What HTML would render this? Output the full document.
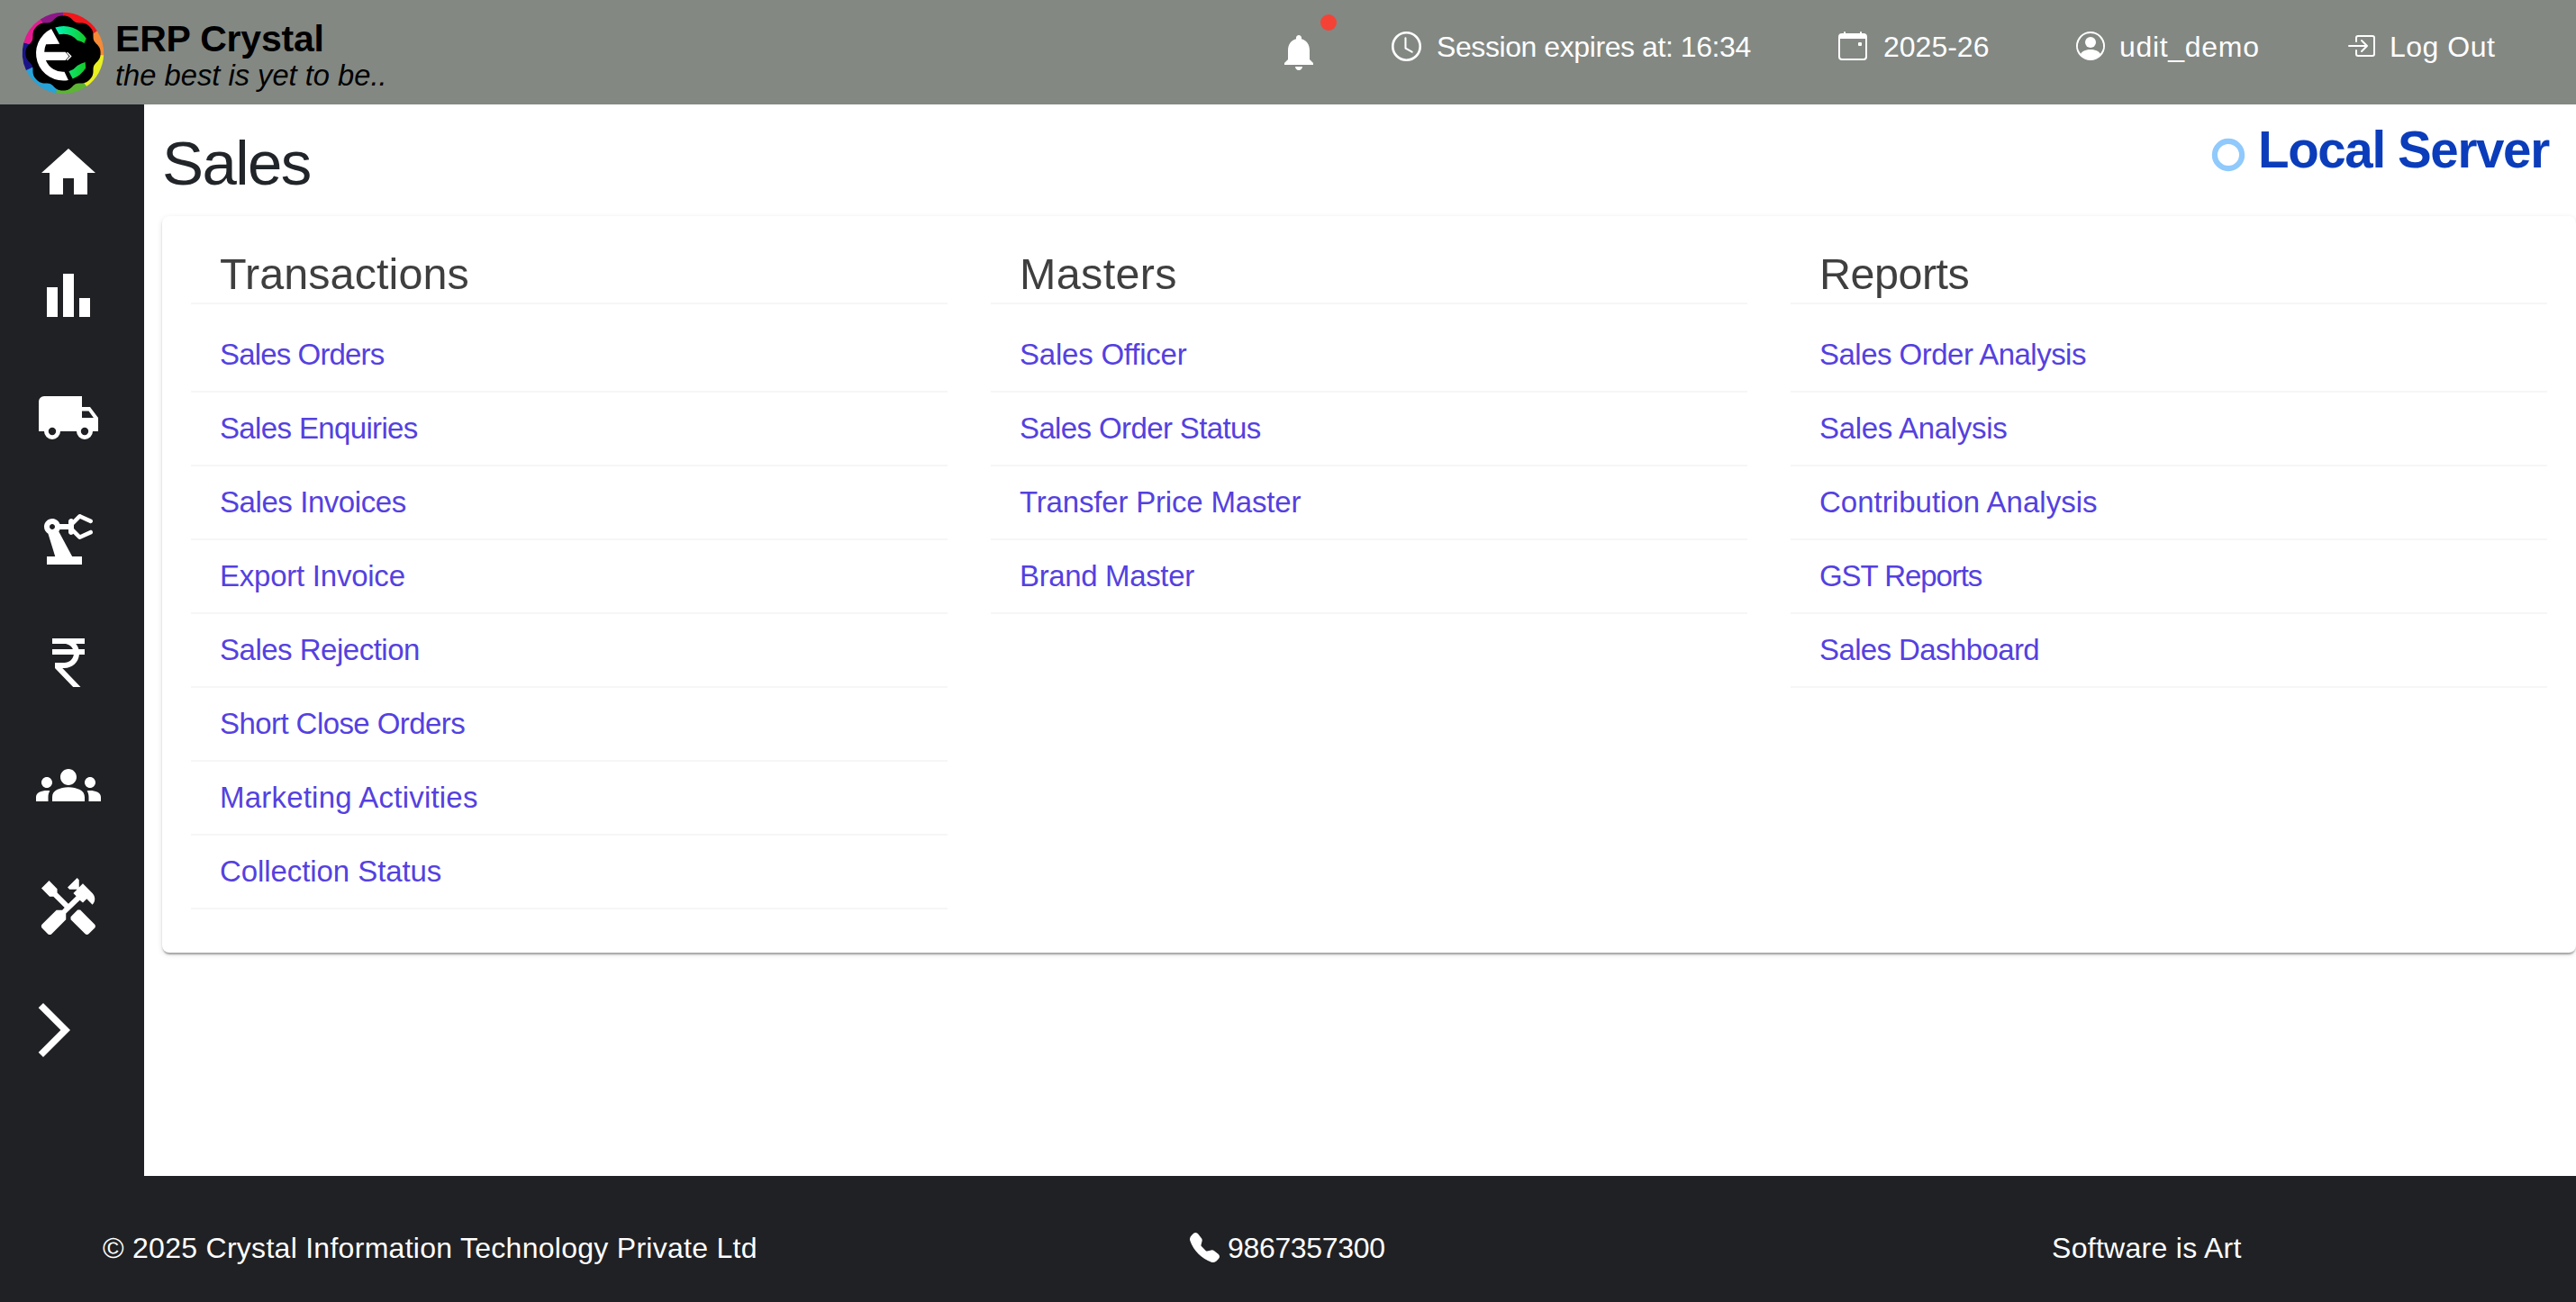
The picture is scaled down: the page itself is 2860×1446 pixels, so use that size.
<!DOCTYPE html>
<html><head><meta charset="utf-8">
<style>
html,body{margin:0;padding:0;width:2860px;height:1446px;overflow:hidden;background:#fff;font-family:"Liberation Sans",sans-serif;}
.a{position:absolute;white-space:nowrap;}
#hdr{position:absolute;left:0;top:0;width:2860px;height:116px;background:#838883;}
#side{position:absolute;left:0;top:116px;width:160px;height:1190px;background:#202124;}
#foot{position:absolute;left:0;top:1306px;width:2860px;height:140px;background:#202124;}
.ht{color:#fff;font-size:32px;line-height:32px;}
svg.ico{position:absolute;fill:#fff;overflow:visible;}
.card{position:absolute;left:180px;top:240px;width:2680px;height:818px;background:#fff;border-radius:8px;
 box-shadow:0 4px 2px -2px rgba(0,0,0,.2),0 2px 2px 0 rgba(0,0,0,.14),0 2px 6px 0 rgba(0,0,0,.12);}
.hd{color:#3f3f3f;font-size:48.5px;line-height:48px;}
.ln{color:#5441df;font-size:33px;line-height:33px;}
.dv{position:absolute;height:2px;background:#f6f6f6;width:840px;}
.ft{color:#fff;font-size:32px;line-height:32px;}
</style></head><body>
<div id="hdr"></div>
<div id="side"></div>
<div id="foot"></div>

<!-- logo -->
<svg class="ico" style="left:25px;top:14px;" width="90" height="90" viewBox="0 0 90 90">
<defs>
<linearGradient id="g1" gradientUnits="userSpaceOnUse" x1="36" y1="0" x2="71" y2="0"><stop offset="0" stop-color="#00f8be"/><stop offset="1" stop-color="#14c923"/></linearGradient>
<linearGradient id="g2" gradientUnits="userSpaceOnUse" x1="51" y1="0" x2="71" y2="0"><stop offset="0" stop-color="#0fe46c"/><stop offset="1" stop-color="#14c925"/></linearGradient>
</defs>
<path d="M45 45 L45.00 -0.20 A45.2 45.2 0 0 1 82.91 20.38Z" fill="#f3161a"/><path d="M45 45 L82.91 20.38 A45.2 45.2 0 0 1 90.14 47.37Z" fill="#f68a36"/><path d="M45 45 L90.14 47.37 A45.2 45.2 0 0 1 70.93 82.03Z" fill="#e9f01f"/><path d="M45 45 L70.93 82.03 A45.2 45.2 0 0 1 37.15 89.51Z" fill="#5db434"/><path d="M45 45 L37.15 89.51 A45.2 45.2 0 0 1 4.03 64.10Z" fill="#27a3d7"/><path d="M45 45 L4.03 64.10 A45.2 45.2 0 0 1 1.34 33.30Z" fill="#1b1488"/><path d="M45 45 L1.34 33.30 A45.2 45.2 0 0 1 19.72 7.53Z" fill="#e41a8f"/><path d="M45 45 L19.72 7.53 A45.2 45.2 0 0 1 45.00 -0.20Z" fill="#8d1787"/>
<path d="M86.60 45.00 L86.58 46.09 L86.51 47.18 L86.36 48.26 L86.11 49.32 L85.75 50.36 L85.26 51.38 L84.65 52.35 L83.95 53.28 L83.18 54.17 L82.38 55.02 L81.58 55.84 L80.84 56.64 L80.17 57.46 L79.62 58.29 L79.18 59.16 L78.87 60.08 L78.68 61.06 L78.58 62.11 L78.53 63.21 L78.51 64.35 L78.48 65.52 L78.40 66.69 L78.24 67.84 L77.98 68.96 L77.61 70.02 L77.13 71.02 L76.55 71.95 L75.89 72.82 L75.17 73.63 L74.42 74.42 L73.63 75.17 L72.82 75.89 L71.95 76.55 L71.02 77.13 L70.02 77.61 L68.96 77.98 L67.84 78.24 L66.69 78.40 L65.52 78.48 L64.35 78.51 L63.21 78.53 L62.11 78.58 L61.06 78.68 L60.08 78.87 L59.16 79.18 L58.29 79.62 L57.46 80.17 L56.64 80.84 L55.84 81.58 L55.02 82.38 L54.17 83.18 L53.28 83.95 L52.35 84.65 L51.38 85.26 L50.36 85.75 L49.32 86.11 L48.26 86.36 L47.18 86.51 L46.09 86.58 L45.00 86.60 L43.91 86.58 L42.82 86.51 L41.74 86.36 L40.68 86.11 L39.64 85.75 L38.62 85.26 L37.65 84.65 L36.72 83.95 L35.83 83.18 L34.98 82.38 L34.16 81.58 L33.36 80.84 L32.54 80.17 L31.71 79.62 L30.84 79.18 L29.92 78.87 L28.94 78.68 L27.89 78.58 L26.79 78.53 L25.65 78.51 L24.48 78.48 L23.31 78.40 L22.16 78.24 L21.04 77.98 L19.98 77.61 L18.98 77.13 L18.05 76.55 L17.18 75.89 L16.37 75.17 L15.58 74.42 L14.83 73.63 L14.11 72.82 L13.45 71.95 L12.87 71.02 L12.39 70.02 L12.02 68.96 L11.76 67.84 L11.60 66.69 L11.52 65.52 L11.49 64.35 L11.47 63.21 L11.42 62.11 L11.32 61.06 L11.13 60.08 L10.82 59.16 L10.38 58.29 L9.83 57.46 L9.16 56.64 L8.42 55.84 L7.62 55.02 L6.82 54.17 L6.05 53.28 L5.35 52.35 L4.74 51.38 L4.25 50.36 L3.89 49.32 L3.64 48.26 L3.49 47.18 L3.42 46.09 L3.40 45.00 L3.42 43.91 L3.49 42.82 L3.64 41.74 L3.89 40.68 L4.25 39.64 L4.74 38.62 L5.35 37.65 L6.05 36.72 L6.82 35.83 L7.62 34.98 L8.42 34.16 L9.16 33.36 L9.83 32.54 L10.38 31.71 L10.82 30.84 L11.13 29.92 L11.32 28.94 L11.42 27.89 L11.47 26.79 L11.49 25.65 L11.52 24.48 L11.60 23.31 L11.76 22.16 L12.02 21.04 L12.39 19.98 L12.87 18.98 L13.45 18.05 L14.11 17.18 L14.83 16.37 L15.58 15.58 L16.37 14.83 L17.18 14.11 L18.05 13.45 L18.98 12.87 L19.98 12.39 L21.04 12.02 L22.16 11.76 L23.31 11.60 L24.48 11.52 L25.65 11.49 L26.79 11.47 L27.89 11.42 L28.94 11.32 L29.92 11.13 L30.84 10.82 L31.71 10.38 L32.54 9.83 L33.36 9.16 L34.16 8.42 L34.98 7.62 L35.83 6.82 L36.72 6.05 L37.65 5.35 L38.62 4.74 L39.64 4.25 L40.68 3.89 L41.74 3.64 L42.82 3.49 L43.91 3.42 L45.00 3.40 L46.09 3.42 L47.18 3.49 L48.26 3.64 L49.32 3.89 L50.36 4.25 L51.38 4.74 L52.35 5.35 L53.28 6.05 L54.17 6.82 L55.02 7.62 L55.84 8.42 L56.64 9.16 L57.46 9.83 L58.29 10.38 L59.16 10.82 L60.08 11.13 L61.06 11.32 L62.11 11.42 L63.21 11.47 L64.35 11.49 L65.52 11.52 L66.69 11.60 L67.84 11.76 L68.96 12.02 L70.02 12.39 L71.02 12.87 L71.95 13.45 L72.82 14.11 L73.63 14.83 L74.42 15.58 L75.17 16.37 L75.89 17.18 L76.55 18.05 L77.13 18.98 L77.61 19.98 L77.98 21.04 L78.24 22.16 L78.40 23.31 L78.48 24.48 L78.51 25.65 L78.53 26.79 L78.58 27.89 L78.68 28.94 L78.87 29.92 L79.18 30.84 L79.62 31.71 L80.17 32.54 L80.84 33.36 L81.58 34.16 L82.38 34.98 L83.18 35.83 L83.95 36.72 L84.65 37.65 L85.26 38.62 L85.75 39.64 L86.11 40.68 L86.36 41.74 L86.51 42.82 L86.58 43.91Z" fill="#000"/>
<path d="M50.9 75 A30.3 30.3 0 0 1 32 18 L41.2 34.7 L26.1 35.2 A21 21 0 0 0 24.2 43.8 L47.6 43.8 L51.5 48.4 L47.6 52.9 L25.9 52.9 A20.7 20.7 0 0 0 46.5 65.7 Z" fill="#fff"/>
<path d="M49.4 44.2 L53.6 48.5 L49.4 52.8" fill="none" stroke="#fff" stroke-width="1.5"/>
<path d="M36.3 16.4 A30 30 0 0 1 70.8 28.7 L68.6 34.1 Q65 31.5 61 30.9 A21.3 21.3 0 0 0 40.6 24.2 Z" fill="url(#g1)"/>
<path d="M70.2 61.5 A30 30 0 0 1 55.7 73.6 L51.4 65.3 A21.3 21.3 0 0 0 61.1 58.8 Q65.5 56 69.7 55.1 Z" fill="url(#g2)"/>
</svg>

<!-- header texts -->
<div id="t_erp" class="a" style="left:128px;top:23px;font-size:41px;line-height:40px;font-weight:bold;color:#000;letter-spacing:-0.2px;">ERP Crystal</div>
<div id="t_tag" class="a" style="left:128px;top:68px;font-size:32.7px;line-height:32px;font-style:italic;color:#000;">the best is yet to be..</div>

<!-- bell -->
<svg class="ico" style="left:1418px;top:34px;" width="48" height="48" viewBox="0 0 24 24"><path d="M12 22c1.1 0 2-.9 2-2h-4c0 1.1.89 2 2 2zm6-6v-5c0-3.07-1.64-5.64-4.5-6.32V4c0-.83-.67-1.5-1.5-1.5s-1.5.67-1.5 1.5v.68C7.63 5.36 6 7.92 6 11v5l-2 2v1h16v-1l-2-2z"/></svg>
<div class="a" style="left:1466px;top:16px;width:18px;height:18px;border-radius:50%;background:#f44336;"></div>
<!-- clock -->
<svg class="ico" style="left:1545px;top:35px;" width="33" height="33" viewBox="0 0 16 16"><path d="M8 3.5a.5.5 0 0 0-1 0V9a.5.5 0 0 0 .252.434l3.5 2a.5.5 0 0 0 .496-.868L8 8.71z"/><circle cx="8" cy="8" r="7.38" fill="none" stroke="#fff" stroke-width="1.28"/></svg>
<div id="t_sess" class="a ht" style="left:1595px;top:36px;letter-spacing:-0.42px;">Session expires at: 16:34</div>
<!-- calendar -->
<svg class="ico" style="left:2041px;top:35px;" width="32" height="32" viewBox="0 0 16 16"><path d="M11 6.5a.5.5 0 0 1 .5-.5h1a.5.5 0 0 1 .5.5v1a.5.5 0 0 1-.5.5h-1a.5.5 0 0 1-.5-.5z"/><path d="M3.5 0a.5.5 0 0 1 .5.5V1h8V.5a.5.5 0 0 1 1 0V1h1a2 2 0 0 1 2 2v11a2 2 0 0 1-2 2H2a2 2 0 0 1-2-2V3a2 2 0 0 1 2-2h1V.5a.5.5 0 0 1 .5-.5M1 4v10a1 1 0 0 0 1 1h12a1 1 0 0 0 1-1V4z"/></svg>
<div id="t_yr" class="a ht" style="left:2091px;top:36px;">2025-26</div>
<!-- user -->
<svg class="ico" style="left:2305px;top:35px;" width="32" height="32" viewBox="0 0 16 16"><path d="M11 6a3 3 0 1 1-6 0 3 3 0 0 1 6 0"/><path fill-rule="evenodd" d="M0 8a8 8 0 1 1 16 0A8 8 0 0 1 0 8m8-7a7 7 0 0 0-5.468 11.37C3.242 11.226 4.805 10 8 10s4.757 1.225 5.468 2.37A7 7 0 0 0 8 1"/></svg>
<div id="t_user" class="a ht" style="left:2353px;top:36px;letter-spacing:0.69px;">udit_demo</div>
<!-- logout -->
<svg class="ico" style="left:2605px;top:35px;" width="32" height="32" viewBox="0 0 16 16"><path fill-rule="evenodd" d="M6 3.5a.5.5 0 0 1 .5-.5h8a.5.5 0 0 1 .5.5v9a.5.5 0 0 1-.5.5h-8a.5.5 0 0 1-.5-.5v-2a.5.5 0 0 0-1 0v2A1.5 1.5 0 0 0 6.5 14h8a1.5 1.5 0 0 0 1.5-1.5v-9A1.5 1.5 0 0 0 14.5 2h-8A1.5 1.5 0 0 0 5 3.5v2a.5.5 0 0 0 1 0z"/><path fill-rule="evenodd" d="M11.854 8.354a.5.5 0 0 0 0-.708l-3-3a.5.5 0 1 0-.708.708L10.293 7.5H1.5a.5.5 0 0 0 0 1h8.793l-2.147 2.146a.5.5 0 0 0 .708.708z"/></svg>
<div id="t_out" class="a ht" style="left:2653px;top:36px;letter-spacing:0.50px;">Log Out</div>

<!-- sidebar icons -->
<svg class="ico" style="left:40px;top:156px;" width="72" height="72" viewBox="0 0 24 24"><path d="M10 20v-6h4v6h5v-8h3L12 3 2 12h3v8z"/></svg>
<svg class="ico" style="left:40px;top:292px;" width="72" height="72" viewBox="0 0 24 24"><path d="M4 9h4v11H4zm12 4h4v7h-4zm-6-9h4v16h-4z"/></svg>
<svg class="ico" style="left:40px;top:428px;" width="72" height="72" viewBox="0 0 24 24"><path fill-rule="evenodd" d="M1 6a2 2 0 0 1 2-2H17V8H20L23 12V17H21A3 3 0 0 1 15 17H9A3 3 0 0 1 3 17H1Z M17 9.5H19.5L21.3 12H17Z M6 15.6a1.4 1.4 0 1 0 0 2.8a1.4 1.4 0 1 0 0-2.8Z M18 15.6a1.4 1.4 0 1 0 0 2.8a1.4 1.4 0 1 0 0-2.8Z"/></svg>
<svg class="ico" style="left:40px;top:564px;" width="72" height="72" viewBox="0 0 24 24"><path d="M19.93 8.35l-3.6 1.68L14 7.7V6.3l2.33-2.33 3.6 1.68c.38.18.82.01 1-.36.18-.38.01-.82-.36-1l-3.92-1.83c-.38-.18-.83-.1-1.13.2L13.78 4.4c-.18-.24-.46-.4-.78-.4-.55 0-1 .45-1 1v1H8.82C8.4 4.84 7.3 4 6 4 4.34 4 3 5.34 3 7c0 1.1.6 2.05 1.48 2.58L7.08 18H4v3h13v-3h-3.62L8.41 8.77c.17-.24.31-.49.41-.77H12v1c0 .55.45 1 1 1 .32 0 .6-.16.78-.4l1.740 1.74c.3.3.75.38 1.13.2l3.92-1.83c.38-.18.54-.62.36-1-.18-.37-.62-.54-1-.36zM6 8c-.55 0-1-.45-1-1s.45-1 1-1 1 .45 1 1-.45 1-1 1z"/></svg>
<svg class="ico" style="left:40px;top:700px;" width="72" height="72" viewBox="0 0 24 24"><path d="M13.66 7C13.1 5.82 11.9 5 10.5 5L6 5V3h12v2l-3.26 0c.48.58.84 1.26 1.05 2L18 7v2l-2.02 0c-.25 2.8-2.61 5-5.48 5h-.73l6.73 7h-2.77L7 14v-2h3.5c1.76 0 3.22-1.3 3.46-3L6 9V7h7.66z"/></svg>
<svg class="ico" style="left:40px;top:836px;" width="72" height="72" viewBox="0 0 24 24"><path d="M12 12.75c1.63 0 3.07.39 4.24.9 1.08.48 1.76 1.560 1.76 2.73V18H6v-1.61c0-1.18.68-2.26 1.76-2.73 1.17-.52 2.61-.91 4.24-.91zM4 13c1.1 0 2-.9 2-2s-.9-2-2-2-2 .9-2 2 .9 2 2 2zm1.13 1.1c-.37-.06-.74-.1-1.13-.1-.99 0-1.93.21-2.78.58C.48 14.9 0 15.62 0 16.43V18h4.5v-1.61c0-.83.23-1.61.63-2.29zM20 13c1.1 0 2-.9 2-2s-.9-2-2-2-2 .9-2 2 .9 2 2 2zm4 3.43c0-.81-.48-1.53-1.22-1.85-.85-.37-1.79-.58-2.78-.58-.39 0-.76.04-1.13.1.4.68.63 1.46.63 2.29V18H24v-1.57zM12 6c1.66 0 3 1.34 3 3s-1.34 3-3 3-3-1.34-3-3 1.34-3 3-3z"/></svg>
<svg class="ico" style="left:40px;top:972px;" width="72" height="72" viewBox="0 0 24 24"><path d="M21.67 18.17l-5.3-5.3h-.99l-2.54 2.54v.99l5.3 5.3c.39.39 1.02.39 1.41 0l2.12-2.12c.39-.38.39-1.02 0-1.41z"/><path d="M17.34 10.19l1.41-1.41 2.12 2.12c1.17-1.17 1.17-3.07 0-4.24l-3.54-3.54-1.41 1.41V1.71l-.7-.71-3.54 3.54.71.71h2.83l-1.41 1.41 1.06 1.06-2.89 2.89-4.13-4.13V5.06L4.83 2.04 2 4.87 5.03 7.9h1.41l4.13 4.13-.85.85H7.55l-5.3 5.3c-.39.39-.39 1.02 0 1.41l2.12 2.12c.39.39 1.02.39 1.41 0l5.3-5.3V14.2L16.2 9.25z"/></svg>
<svg class="ico" style="left:24px;top:1108px;" width="72" height="72" viewBox="0 0 24 24"><path d="M6.23 20.23 8 22l10-10L8 2 6.23 3.77 14.46 12z"/></svg>

<div id="t_sales" class="a" style="left:180px;top:147.5px;font-size:69px;line-height:68px;color:#212529;letter-spacing:-1.60px;">Sales</div>
<svg class="ico" style="left:2455px;top:154px;" width="37" height="37" viewBox="0 0 37 37"><circle cx="19" cy="18" r="15.1" fill="none" stroke="#90c9fc" stroke-width="6.2"/></svg>
<div id="t_local" class="a" style="left:2507px;top:138.5px;font-size:56.5px;line-height:56px;font-weight:bold;color:#0b3dbb;letter-spacing:-1.37px;">Local Server</div>

<div class="card"></div>

<!-- column headings -->
<div id="h1" class="a hd" style="left:244px;top:280px;letter-spacing:0.09px;">Transactions</div>
<div id="h2" class="a hd" style="left:1132px;top:280px;letter-spacing:0.34px;">Masters</div>
<div id="h3" class="a hd" style="left:2020px;top:280px;letter-spacing:-0.50px;">Reports</div>
<div class="dv" style="left:212px;top:336px;"></div>
<div class="dv" style="left:1100px;top:336px;"></div>
<div class="dv" style="left:1988px;top:336px;"></div>

<!-- links col1 -->
<div id="l1_0" class="a ln" style="left:244px;top:377px;letter-spacing:-0.85px;">Sales Orders</div>
<div id="l1_1" class="a ln" style="left:244px;top:459px;letter-spacing:-0.64px;">Sales Enquiries</div>
<div id="l1_2" class="a ln" style="left:244px;top:541px;letter-spacing:-0.43px;">Sales Invoices</div>
<div id="l1_3" class="a ln" style="left:244px;top:623px;letter-spacing:-0.24px;">Export Invoice</div>
<div id="l1_4" class="a ln" style="left:244px;top:705px;letter-spacing:-0.49px;">Sales Rejection</div>
<div id="l1_5" class="a ln" style="left:244px;top:787px;letter-spacing:-0.57px;">Short Close Orders</div>
<div id="l1_6" class="a ln" style="left:244px;top:869px;letter-spacing:0.21px;">Marketing Activities</div>
<div id="l1_7" class="a ln" style="left:244px;top:951px;letter-spacing:-0.08px;">Collection Status</div>
<div class="dv" style="left:212px;top:434px;"></div>
<div class="dv" style="left:212px;top:516px;"></div>
<div class="dv" style="left:212px;top:598px;"></div>
<div class="dv" style="left:212px;top:680px;"></div>
<div class="dv" style="left:212px;top:762px;"></div>
<div class="dv" style="left:212px;top:844px;"></div>
<div class="dv" style="left:212px;top:926px;"></div>
<div class="dv" style="left:212px;top:1008px;"></div>
<!-- links col2 -->
<div id="l2_0" class="a ln" style="left:1132px;top:377px;letter-spacing:-0.22px;">Sales Officer</div>
<div id="l2_1" class="a ln" style="left:1132px;top:459px;letter-spacing:-0.62px;">Sales Order Status</div>
<div id="l2_2" class="a ln" style="left:1132px;top:541px;letter-spacing:-0.18px;">Transfer Price Master</div>
<div id="l2_3" class="a ln" style="left:1132px;top:623px;letter-spacing:-0.36px;">Brand Master</div>
<div class="dv" style="left:1100px;top:434px;"></div>
<div class="dv" style="left:1100px;top:516px;"></div>
<div class="dv" style="left:1100px;top:598px;"></div>
<div class="dv" style="left:1100px;top:680px;"></div>
<!-- links col3 -->
<div id="l3_0" class="a ln" style="left:2020px;top:377px;letter-spacing:-0.52px;">Sales Order Analysis</div>
<div id="l3_1" class="a ln" style="left:2020px;top:459px;letter-spacing:-0.31px;">Sales Analysis</div>
<div id="l3_2" class="a ln" style="left:2020px;top:541px;letter-spacing:0.02px;">Contribution Analysis</div>
<div id="l3_3" class="a ln" style="left:2020px;top:623px;letter-spacing:-1.06px;">GST Reports</div>
<div id="l3_4" class="a ln" style="left:2020px;top:705px;letter-spacing:-0.61px;">Sales Dashboard</div>
<div class="dv" style="left:1988px;top:434px;"></div>
<div class="dv" style="left:1988px;top:516px;"></div>
<div class="dv" style="left:1988px;top:598px;"></div>
<div class="dv" style="left:1988px;top:680px;"></div>
<div class="dv" style="left:1988px;top:762px;"></div>

<!-- footer -->
<div id="f1" class="a ft" style="left:114px;top:1370px;letter-spacing:0.28px;">© 2025 Crystal Information Technology Private Ltd</div>
<svg class="ico" style="left:1321px;top:1369px;" width="33" height="33" viewBox="0 0 16 16"><path fill-rule="evenodd" d="M1.885.511a1.745 1.745 0 0 1 2.61.163L6.29 2.98c.329.423.445.974.315 1.494l-.547 2.19a.68.68 0 0 0 .178.643l2.457 2.457a.68.68 0 0 0 .644.178l2.189-.547a1.75 1.75 0 0 1 1.494.315l2.306 1.794c.829.645.905 1.87.163 2.611l-1.034 1.034c-.74.74-1.846 1.065-2.877.702a18.6 18.6 0 0 1-7.01-4.42 18.6 18.6 0 0 1-4.42-7.009c-.362-1.03-.037-2.137.703-2.877z"/></svg>
<div id="f2" class="a ft" style="left:1363px;top:1370px;letter-spacing:-0.33px;">9867357300</div>
<div id="f3" class="a ft" style="left:2278px;top:1370px;letter-spacing:0.29px;">Software is Art</div>
</body></html>
